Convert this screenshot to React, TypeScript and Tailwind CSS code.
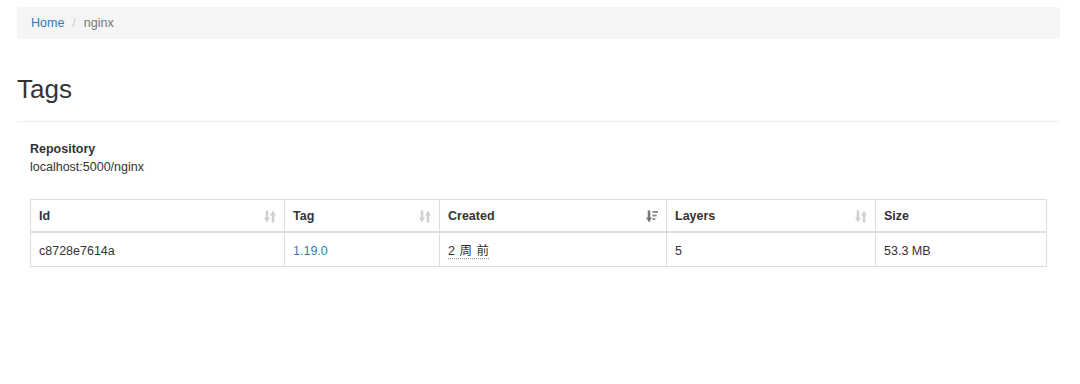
import type { ReactNode } from 'react'

function SortIcon() {
  return (
    <svg width="12" height="13" viewBox="0 0 12 13" className="shrink-0">
      <rect x="1.75" y="0.5" width="2.5" height="8" fill="#d0d0d0" />
      <polygon points="0,7.5 6,7.5 3,12.5" fill="#d0d0d0" />
      <rect x="7.75" y="4.5" width="2.5" height="8" fill="#d0d0d0" />
      <polygon points="6,5.5 12,5.5 9,0.5" fill="#d0d0d0" />
    </svg>
  )
}

function SortDescIcon() {
  return (
    <svg width="12" height="13" viewBox="0 0 12 13" className="shrink-0">
      <rect x="1.75" y="0.5" width="2.5" height="8" fill="#777777" />
      <polygon points="0,7.5 6,7.5 3,12.5" fill="#777777" />
      <rect x="6.5" y="1" width="5.5" height="1.8" fill="#888888" />
      <rect x="6.5" y="4.6" width="4.2" height="1.8" fill="#888888" />
      <rect x="6.5" y="8.2" width="2.8" height="1.8" fill="#888888" />
    </svg>
  )
}

function HeaderCell({ label, width, icon }: { label: string; width: string; icon?: ReactNode }) {
  return (
    <th className={`${width} border border-[#dddddd] border-b-2 px-[8px] pt-[8px] pb-[6px] text-left font-bold leading-[17px]`}>
      <div className="flex items-center justify-between">
        <span>{label}</span>
        {icon}
      </div>
    </th>
  )
}

const cell = 'border border-[#dddddd] px-[8px] pt-[9px] pb-[6px] leading-[18px]'

export default function App() {
  return (
    <div className="min-h-[384px] bg-white font-['Liberation_Sans',Arial,sans-serif] text-[12.5px] text-[#333333]">
      <div className="ml-[17px] mr-[20px] pt-[7px]">
        {/* breadcrumb */}
        <ol className="flex items-center rounded-[4px] bg-[#f5f5f5] px-[14px] py-[7px] leading-[18px]">
          <li>
            <a href="#" className="text-[#337ab7]">
              Home
            </a>
          </li>
          <li className="px-[8px] text-[#cccccc]">/</li>
          <li className="text-[#777777]">nginx</li>
        </ol>

        <h1 className="mt-[35px] text-[26px] leading-[30px] font-normal text-[#333333]">Tags</h1>
        <hr className="mt-[17px] border-t border-[#eeeeee]" />

        <div className="pl-[13px] pr-[14px]">
          <div className="mt-[18px]">
            <div className="font-bold leading-[18px]">Repository</div>
            <div className="leading-[18px]">localhost:5000/nginx</div>
          </div>

          <table className="mt-[23px] w-full table-fixed border-collapse">
            <thead>
              <tr>
                <HeaderCell label="Id" width="w-[254px]" icon={<SortIcon />} />
                <HeaderCell label="Tag" width="w-[155px]" icon={<SortIcon />} />
                <HeaderCell label="Created" width="w-[227px]" icon={<SortDescIcon />} />
                <HeaderCell label="Layers" width="w-[209px]" icon={<SortIcon />} />
                <HeaderCell label="Size" width="w-[171px]" />
              </tr>
            </thead>
            <tbody>
              <tr>
                <td className={cell}>c8728e7614a</td>
                <td className={cell}>
                  <a href="#" className="text-[#337ab7]">
                    1.19.0
                  </a>
                </td>
                <td className={cell}>
                  <abbr
                    title="2020-11-25"
                    className="font-['Liberation_Sans','Noto_Sans_CJK_SC',sans-serif] tracking-[0.5px] underline decoration-dotted decoration-[#999999] underline-offset-[3px]"
                  >
                    2 周 前
                  </abbr>
                </td>
                <td className={cell}>5</td>
                <td className={cell}>53.3 MB</td>
              </tr>
            </tbody>
          </table>
        </div>
      </div>
    </div>
  )
}
